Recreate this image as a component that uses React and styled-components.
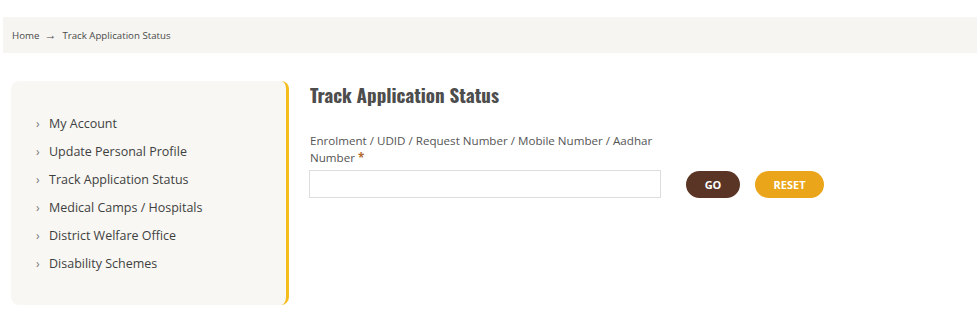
import React from 'react';
import styled, { createGlobalStyle } from 'styled-components';

const GlobalStyle = createGlobalStyle`
  body {
    margin: 0;
    background: #fff;
    font-family: "Open Sans", "Noto Sans", sans-serif;
    color: #444;
  }
`;

const Breadcrumb = styled.div`
  margin: 17px 2px 0 3px;
  height: 36px;
  background: #f6f5f1;
  display: flex;
  align-items: center;
  padding-left: 9px;
  font-size: 9.7px;
  color: #4a4a4a;

  .arrow {
    margin: 0 6px 0 5px;
    font-size: 12px;
    line-height: 1;
  }
`;

const Content = styled.div`
  display: flex;
  gap: 21px;
  padding: 28px 0 0 11px;
`;

const Sidebar = styled.ul`
  list-style: none;
  margin: 0;
  width: 278px;
  height: 224px;
  box-sizing: border-box;
  padding: 29px 0 0 25px;
  background: #f8f7f3;
  border-right: 3px solid #f4bd1c;
  border-radius: 8px;
`;

const MenuItem = styled.li`
  height: 28px;
  line-height: 28px;
  font-size: 12.5px;
  color: #3f3f3f;
  display: flex;
  align-items: center;

  &::before {
    content: '›';
    color: #777;
    font-size: 12px;
    width: 13px;
  }
`;

const Main = styled.div`
  padding-top: 0;
`;

const Title = styled.h1`
  margin: 0;
  font-family: "Oswald", "Liberation Sans Narrow", "DejaVu Sans Condensed", sans-serif;
  font-weight: bold;
  font-size: 19px;
  color: #4d4d4d;
  line-height: 26px;
`;

const Label = styled.label`
  display: block;
  width: 356px;
  margin-top: 25px;
  font-size: 11.6px;
  line-height: 17px;
  color: #555;

  span {
    color: #b06a2a;
    font-weight: bold;
  }
`;

const Row = styled.div`
  display: flex;
  align-items: center;
  margin-top: 4px;
`;

const Input = styled.input`
  width: 352px;
  height: 28px;
  box-sizing: border-box;
  border: 1px solid #ddd;
  background: #fff;
  margin: 0 0 0 -1px;
`;

const Button = styled.button`
  height: 27px;
  width: ${(p) => p.w}px;
  margin-left: ${(p) => p.gap}px;
  border: none;
  border-radius: 14px;
  background: ${(p) => p.bg};
  color: #fff;
  font-family: "Open Sans", sans-serif;
  font-weight: bold;
  font-size: 11px;
  text-transform: uppercase;
`;

const menu = [
  'My Account',
  'Update Personal Profile',
  'Track Application Status',
  'Medical Camps / Hospitals',
  'District Welfare Office',
  'Disability Schemes',
];

export default function App() {
  return (
    <>
      <GlobalStyle />
      <Breadcrumb>
        Home<span className="arrow">→</span>Track Application Status
      </Breadcrumb>
      <Content>
        <Sidebar>
          {menu.map((m) => (
            <MenuItem key={m}>{m}</MenuItem>
          ))}
        </Sidebar>
        <Main>
          <Title>Track Application Status</Title>
          <Label>
            Enrolment / UDID / Request Number / Mobile Number / Aadhar Number <span>*</span>
          </Label>
          <Row>
            <Input type="text" />
            <Button bg="#5a3526" w={54} gap={25}>Go</Button>
            <Button bg="#eba51a" w={69} gap={15}>Reset</Button>
          </Row>
        </Main>
      </Content>
    </>
  );
}
